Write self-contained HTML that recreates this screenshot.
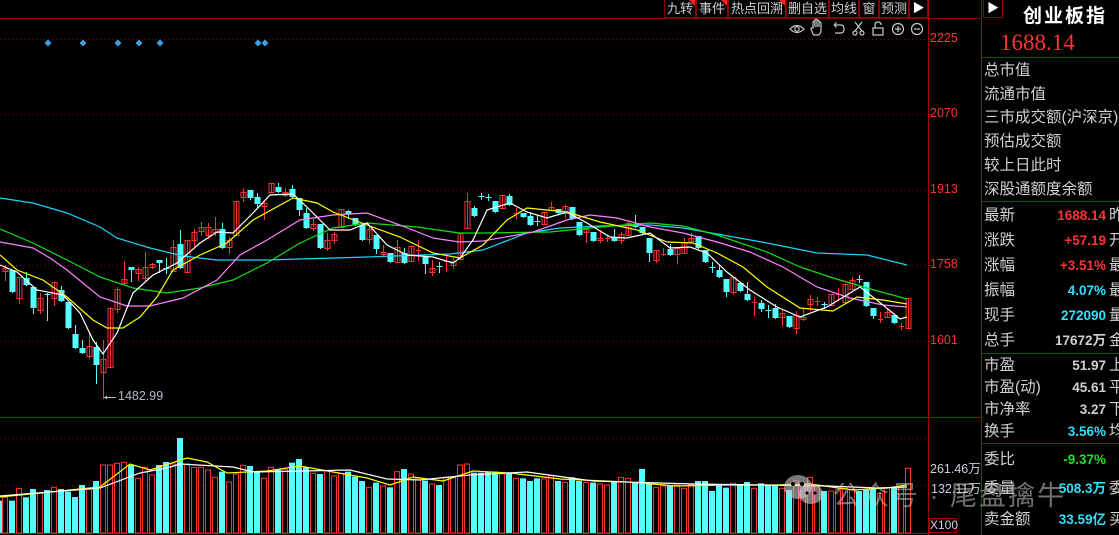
<!DOCTYPE html>
<html><head><meta charset="utf-8">
<style>
*{margin:0;padding:0;box-sizing:border-box}
body{width:1119px;height:535px;background:#000;overflow:hidden;position:relative;font-family:"Liberation Sans","Noto Sans CJK SC",sans-serif}
.a{position:absolute;white-space:nowrap}
.btn{position:absolute;top:0;height:18px;border:1px solid #8a0000;border-top:none;color:#d0d0d0;font-size:13px;line-height:17px;text-align:center}
.tri{position:absolute;top:0;right:0;width:0;height:0;border-top:6px solid #ff2020;border-left:6px solid transparent}
.lb{position:absolute;left:984px;color:#d0d0d0;font-size:15.5px;line-height:18px}
.v{position:absolute;right:13px;font-weight:bold;font-size:13.5px;line-height:16px;text-align:right}
.c{position:absolute;left:1109px;color:#d0d0d0;font-size:15.5px;line-height:18px}
</style></head><body>
<svg id="s" width="1119" height="535" style="position:absolute;left:0;top:0"></svg>

<div class="btn" style="left:664px;width:32px">九转<div class="tri"></div></div>
<div class="btn" style="left:696px;width:32px">事件<div class="tri"></div></div>
<div class="btn" style="left:728px;width:58px">热点回溯<div class="tri"></div></div>
<div class="btn" style="left:786px;width:43px">删自选</div>
<div class="btn" style="left:829px;width:30px">均线</div>
<div class="btn" style="left:859px;width:20px">窗</div>
<div class="btn" style="left:879px;width:30px">预测</div>
<div class="btn" style="left:909px;width:19px;font-size:12px;color:#fff">&#9654;</div>
<div class="btn" style="left:983px;width:20px;font-size:12px;color:#fff">&#9654;</div>

<div class="a" style="left:1023px;top:1px;font-size:19px;font-weight:bold;color:#fff;letter-spacing:2px">创业板指</div>
<div class="a" style="left:1000px;top:30px;font-family:'Liberation Serif',serif;font-size:23px;color:#ff3232">1688.14</div>

<div class="lb" style="top:62px">总市值</div>
<div class="lb" style="top:86px">流通市值</div>
<div class="lb" style="top:109px">三市成交额(沪深京)</div>
<div class="lb" style="top:133px">预估成交额</div>
<div class="lb" style="top:157px">较上日此时</div>
<div class="lb" style="top:181px">深股通额度余额</div>

<div class="lb" style="top:207px">最新</div><div class="v" style="top:208px;color:#ff3232">1688.14</div><div class="c" style="top:207px">昨</div>
<div class="lb" style="top:232px">涨跌</div><div class="v" style="top:233px;color:#ff3232">+57.19</div><div class="c" style="top:232px">开</div>
<div class="lb" style="top:257px">涨幅</div><div class="v" style="top:258px;color:#ff3232">+3.51%</div><div class="c" style="top:257px">最</div>
<div class="lb" style="top:282px">振幅</div><div class="v" style="top:283px;color:#30e0ff">4.07%</div><div class="c" style="top:282px">最</div>
<div class="lb" style="top:307px">现手</div><div class="v" style="top:308px;color:#30e0ff">272090</div><div class="c" style="top:307px">量</div>
<div class="lb" style="top:332px">总手</div><div class="v" style="top:333px;color:#d0d0d0">17672万</div><div class="c" style="top:332px">金</div>
<div class="lb" style="top:357px">市盈</div><div class="v" style="top:358px;color:#d0d0d0">51.97</div><div class="c" style="top:357px">上</div>
<div class="lb" style="top:379px">市盈(动)</div><div class="v" style="top:380px;color:#d0d0d0">45.61</div><div class="c" style="top:379px">平</div>
<div class="lb" style="top:401px">市净率</div><div class="v" style="top:402px;color:#d0d0d0">3.27</div><div class="c" style="top:401px">下</div>
<div class="lb" style="top:423px">换手</div><div class="v" style="top:424px;color:#30e0ff">3.56%</div><div class="c" style="top:423px">均</div>
<div class="lb" style="top:451px">委比</div><div class="v" style="top:452px;color:#20e020">-9.37%</div>
<div class="lb" style="top:480px">委量</div><div class="v" style="top:481px;color:#30e0ff">508.3万</div><div class="c" style="top:480px">委</div>
<div class="lb" style="top:511px">卖金额</div><div class="v" style="top:512px;color:#30e0ff">33.59亿</div><div class="c" style="top:511px">买</div>

<div class="a" style="left:930px;top:31px;color:#ff3232;font-size:12.5px">2225</div>
<div class="a" style="left:930px;top:106px;color:#ff3232;font-size:12.5px">2070</div>
<div class="a" style="left:930px;top:182px;color:#ff3232;font-size:12.5px">1913</div>
<div class="a" style="left:930px;top:257px;color:#ff3232;font-size:12.5px">1758</div>
<div class="a" style="left:930px;top:333px;color:#ff3232;font-size:12.5px">1601</div>
<div class="a" style="left:930px;top:458px;color:#c8d0e0;font-size:12.5px">261.46万</div>
<div class="a" style="left:931px;top:478px;color:#c8d0e0;font-size:12.5px">132.11万</div>
<div class="a" style="left:929px;top:518px;width:28px;height:15px;border:1px solid #a00000;color:#c8d0e0;font-size:12px;line-height:13px;text-align:center">X100</div>
<div class="a" style="left:118px;top:389px;color:#b0b8c8;font-size:12.5px">1482.99</div>

<svg width="60" height="40" style="position:absolute;left:778px;top:470px">
<ellipse cx="20" cy="17" rx="14" ry="12" fill="rgba(200,200,200,0.6)"/>
<ellipse cx="33" cy="24" rx="12" ry="10" fill="rgba(200,200,200,0.6)"/>
<circle cx="15" cy="14" r="2" fill="#000"/><circle cx="24" cy="14" r="2" fill="#000"/>
<circle cx="29" cy="23" r="1.6" fill="#000"/><circle cx="37" cy="23" r="1.6" fill="#000"/>
</svg>
<div class="a" style="left:833px;top:474px;color:rgba(200,200,200,0.55);font-size:27px;letter-spacing:2px">公众号 · 尾盘擒牛</div>

<script>
var s=document.getElementById('s'),h='';
function L(x1,y1,x2,y2,c,w,d){h+='<line x1="'+x1+'" y1="'+y1+'" x2="'+x2+'" y2="'+y2+'" stroke="'+c+'" stroke-width="'+(w||1)+'"'+(d?' stroke-dasharray="'+d+'"':'')+'/>';}
[39,114,190,265,341].forEach(function(y){L(0,y+.5,928,y+.5,'#8a0000',1,'1 3');L(928,y+.5,932,y+.5,'#8a0000');});
[438,485].forEach(function(y){L(0,y+.5,928,y+.5,'#8a0000',1,'1 3');});
L(0,18.5,981,18.5,'#8a0000');L(928.5,0,928.5,535,'#a00000');L(981.5,0,981.5,535,'#a00000');
L(0,417.5,981,417.5,'#a00000');L(981,57.5,1119,57.5,'#a00000');L(981,201.5,1119,201.5,'#a00000');
L(981,353.5,1119,353.5,'#a00000');L(981,443.5,1119,443.5,'#a00000');L(0,533.5,928,533.5,'#a00000');
var C=[[268,271,265,280,1],[270,292,270,292,0],[277,298,277,303,1],[278,285,272,285,0],[287,308,287,313,0],[298,310,293,313,1],[294,295,293,320,0],[282,298,282,305,1],[290,301,286,301,0],[302,328,302,328,0],[334,348,325,348,0],[348,353,340,353,0],[346,356,333,358,1],[347,365,342,383,0],[359,372,340,398,1],[308,367,307,367,1],[289,309,287,312,1],[279,283,261,284,1],[267,270,267,281,0],[269,273,267,280,1],[267,278,252,280,1],[264,267,263,268,1],[260,263,260,272,0],[268,269,258,273,0],[247,271,240,271,1],[244,268,230,268,0],[240,272,240,272,1],[232,240,229,246,1],[227,231,222,235,1],[227,235,223,238,1],[229,232,217,235,1],[229,248,223,248,0],[240,247,237,253,1],[201,235,201,235,1],[192,197,188,201,1],[190,198,190,199,0],[197,204,193,207,0],[203,206,202,219,1],[183,192,183,192,1],[187,192,183,192,0],[192,195,188,196,1],[189,197,185,197,0],[198,210,198,215,0],[213,228,208,228,0],[224,228,218,230,1],[224,248,224,248,0],[240,248,233,250,1],[234,240,232,243,1],[209,227,209,227,1],[211,214,210,218,0],[218,225,218,225,0],[225,240,225,240,0],[229,239,227,243,1],[235,249,235,253,0],[252,254,245,255,1],[253,262,253,262,0],[247,262,240,262,1],[253,263,248,263,0],[246,261,246,261,1],[250,251,240,260,1],[257,264,257,273,0],[268,272,260,275,1],[266,267,262,272,0],[261,262,256,271,1],[261,265,258,268,1],[233,259,233,259,1],[201,228,193,228,1],[208,216,206,216,0],[196,197,193,199,0],[197,198,194,200,0],[201,212,201,212,0],[195,208,195,208,1],[196,205,194,205,0],[213,214,208,218,1],[213,217,213,217,0],[216,225,213,225,0],[221,222,215,225,0],[212,224,212,224,1],[207,210,202,210,1],[209,213,209,213,0],[206,213,204,217,1],[207,219,207,219,0],[222,235,222,235,0],[229,232,228,242,1],[232,241,232,241,0],[238,240,230,242,1],[238,239,235,241,1],[237,241,229,241,0],[234,240,232,243,1],[223,235,221,235,1],[224,227,215,227,0],[227,233,227,233,0],[238,253,238,261,0],[250,260,250,262,1],[254,255,248,255,1],[249,255,244,255,0],[248,254,247,263,1],[242,253,238,253,1],[238,241,233,242,1],[236,248,236,248,0],[250,262,250,262,0],[267,268,262,272,0],[270,277,265,277,0],[279,292,279,296,0],[277,292,277,294,1],[283,291,283,291,0],[294,300,282,300,0],[302,303,297,315,1],[303,309,300,311,0],[310,311,305,317,0],[308,318,304,318,0],[313,317,310,325,1],[316,327,316,327,0],[315,328,311,333,1],[317,319,308,320,1],[299,304,295,310,1],[301,302,297,305,1],[304,305,302,308,0],[294,305,294,305,1],[294,295,288,300,1],[284,302,284,302,1],[280,289,277,289,1],[279,280,275,282,0],[282,306,282,306,0],[308,316,308,318,0],[319,320,312,322,1],[312,317,309,317,1],[315,323,315,323,0],[326,327,323,329,1],[298,328,298,328,1]];
var V=[262,272,235,262,237,250,240,232,237,245,261,225,238,213,165,165,160,157,165,205,172,195,165,156,162,84,162,172,172,180,202,185,216,192,166,168,185,205,172,177,178,158,147,172,190,192,183,198,190,185,200,213,232,218,228,232,185,177,192,205,212,222,225,202,202,
165,162,188,188,185,185,192,188,205,205,213,205,207,197,213,217,202,213,218,218,222,225,215,202,205,218,177,222,232,228,225,225,235,225,213,213,243,225,233,220,222,216,235,220,225,225,235,240,213,225,202,225,243,243,238,235,238,243,240,235,250,235,232,230,175];
var R='#ff3232',Y='#54ffff';
h+='<rect x="0" y="'+(410+272/3)+'" width="2" height="'+(533-410-272/3)+'" fill="'+Y+'"/>';
C.forEach(function(c,i){var x=5+7*i,t=410+V[i]/3;
 if(c[4])h+='<rect x="'+(x-2.5)+'" y="'+t+'" width="5" height="'+(533-t)+'" fill="none" stroke="'+R+'"/>';
 else h+='<rect x="'+(x-3)+'" y="'+t+'" width="6" height="'+(533-t)+'" fill="'+Y+'"/>';});
function P(pts,c){h+='<polyline fill="none" stroke="'+c+'" stroke-width="1.2" points="'+pts+'"/>';}
P('0,497 100,487 130,464 150,470 187,458 207,462 227,473 267,471 300,466 333,472 367,478 390,485 413,477 443,481 473,471 510,473 560,479 627,482 677,486 727,485 777,485 810,484 853,490 887,488 907,485','#ffff00');
P('0,496 100,488 140,473 167,468 180,464 233,467 253,472 350,470 387,479 420,480 470,475 527,472 593,481 693,484 760,485 827,486 877,488 907,487','#ffffff');
C.forEach(function(c,i){var x=5+7*i,col=c[4]?R:Y;
 L(x+.5,c[2],x+.5,c[3]+1,col);
 var hh=Math.max(c[1]-c[0],1);
 if(c[4]){ if(hh<=1)L(x-2,c[0]+.5,x+3,c[0]+.5,col); else h+='<rect x="'+(x-2)+'" y="'+(c[0]+.5)+'" width="5" height="'+hh+'" fill="none" stroke="'+col+'"/>';}
 else h+='<rect x="'+(x-2.5)+'" y="'+c[0]+'" width="6" height="'+hh+'" fill="'+col+'"/>';});
P('0,198 33,203 67,213 100,227 117,238 150,248 183,256 217,260 267,260 367,257 450,254 483,250 527,233 560,228 600,226 650,225 683,228 717,234 767,243 817,253 867,255 907,265','#20d0ff');
P('0,229 33,243 67,260 100,277 133,288 167,293 200,288 233,280 267,263 300,243 333,228 367,223 417,227 459,233 483,233 550,232 600,227 650,223 683,226 717,235 767,252 800,267 833,278 867,288 907,299','#10e010');
P('0,242 33,248 50,258 67,270 100,297 127,306 150,306 183,298 217,280 240,255 267,240 300,220 333,215 367,213 400,225 433,238 459,242 483,241 533,232 567,220 590,215 617,218 650,227 683,233 717,242 750,252 783,267 817,287 850,298 883,305 907,307','#ff80ff');
P('0,255 17,270 43,280 67,297 93,320 107,328 123,328 140,317 157,297 173,270 200,255 227,243 253,220 293,198 317,203 333,212 367,225 400,237 433,253 460,258 483,245 507,220 527,208 567,212 600,222 637,230 667,242 693,243 717,253 743,267 767,287 800,308 833,311 857,297 883,300 907,304','#ffff00');
P('0,265 17,272 37,290 63,295 80,313 93,340 103,354 117,333 133,293 153,275 177,263 200,243 217,232 233,233 253,213 270,195 293,194 310,210 330,230 350,230 367,223 387,245 407,255 433,257 453,263 460,258 473,240 487,210 510,203 527,212 547,218 567,212 587,223 610,237 627,238 650,233 670,248 690,247 707,253 727,272 750,290 777,307 800,317 827,307 860,287 883,305 900,319 907,317','#ffffff');
L(104,397.5,116,397.5,'#b0b8c8');h+='<path d="M104 397.5 l3 -2 v4z" fill="#b0b8c8"/>';
[48,83,118,139,160,258,265].forEach(function(x){h+='<path d="M'+x+' 39.5 l3.5 3.5 l-3.5 3.5 l-3.5 -3.5z" fill="#3ca0e0"/>';});
var g='#c8c8c8';
h+='<g fill="none" stroke="'+g+'" stroke-width="1.2">'+
'<path d="M790 29 q7 -7 14 0 q-7 7 -14 0z"/><circle cx="797" cy="29" r="2.2"/>'+
'<path d="M813 34 l-2 -5 q0 -2 2 -1 v-6 q1 -2 2 0 v5 v-7 q1 -2 2 0 v7 v-6 q1 -2 2 0 v6 v-4 q1 -2 2 0 v7 q0 4 -3 5 h-4z"/>'+
'<path d="M834 25 h7 q3 0 3 4 q0 4 -3 4 h-6 M834 25 l2.5 -2.5 M834 25 l2.5 2.5"/>'+
'<path d="M855 22 l7 9 M862 22 l-7 9"/><circle cx="855" cy="33" r="2"/><circle cx="862" cy="33" r="2"/>'+
'<rect x="873" y="28" width="10" height="7"/><path d="M875 28 v-3 q0 -3 3 -3 q3 0 3 3"/>'+
'<circle cx="898" cy="29" r="5.5"/><path d="M895 29 h6 M898 26 v6"/>'+
'<circle cx="917" cy="29" r="5.5"/><path d="M914 29 h6"/></g>';
s.innerHTML=h;
</script>
</body></html>
